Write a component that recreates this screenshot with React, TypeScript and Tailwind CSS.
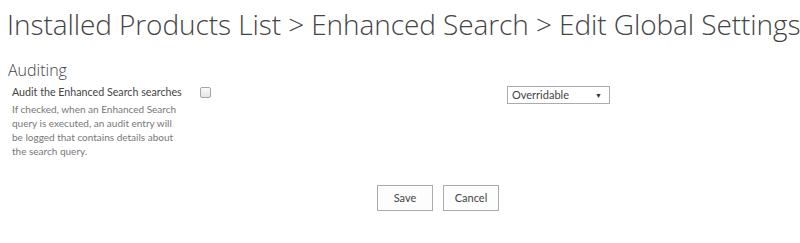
export default function App() {
  return (
    <div className="w-[800px] h-[243px] bg-white font-['Open_Sans',sans-serif] text-[#444]">
      <h1 className="pl-[7px] pt-[6px] text-[28px] leading-[36px] font-light text-[#444] tracking-[-0.08px] whitespace-nowrap">
        Installed Products List &gt; Enhanced Search &gt; Edit Global Settings
      </h1>
      <div className="pl-[8px] pt-[18px] text-[16px] leading-[20px] font-light text-[#444]">Auditing</div>
      <div className="flex pt-[4px] font-['Lato',sans-serif]">
        <div className="pl-[12px] w-[200px]">
          <div className="text-[10.7px] leading-[16px] text-[#444] whitespace-nowrap">Audit the Enhanced Search searches</div>
          <p className="pt-[2px] text-[10px] leading-[14px] text-[#777] whitespace-nowrap">
            If checked, when an Enhanced Search<br />
            query is executed, an audit entry will<br />
            be logged that contains details about<br />
            the search query.
          </p>
        </div>
        <div className="pt-[3px]">
          <div className="w-[11px] h-[11px] border border-[#a6a6a6] rounded-[2px] bg-gradient-to-b from-[#fafafa] to-[#e4e4e4]" />
        </div>
        <div className="ml-[296px] pt-[2px]">
          <div className="flex items-center justify-between w-[103px] h-[18px] border border-[#ababab] bg-white pl-[4px] pr-[7px]">
            <span className="text-[11px] leading-[16px] text-[#444]">Overridable</span>
            <span className="text-[7px] leading-[8px] text-[#333]">▼</span>
          </div>
        </div>
      </div>
      <div className="flex justify-center gap-[10px] pt-[27px] pl-[76px] font-['Lato',sans-serif]">
        <button className="w-[56px] h-[26px] border border-[#ababab] bg-[#fdfdfd] text-[11px] text-[#444]">Save</button>
        <button className="w-[56px] h-[26px] border border-[#ababab] bg-[#fdfdfd] text-[11px] text-[#444]">Cancel</button>
      </div>
    </div>
  );
}
